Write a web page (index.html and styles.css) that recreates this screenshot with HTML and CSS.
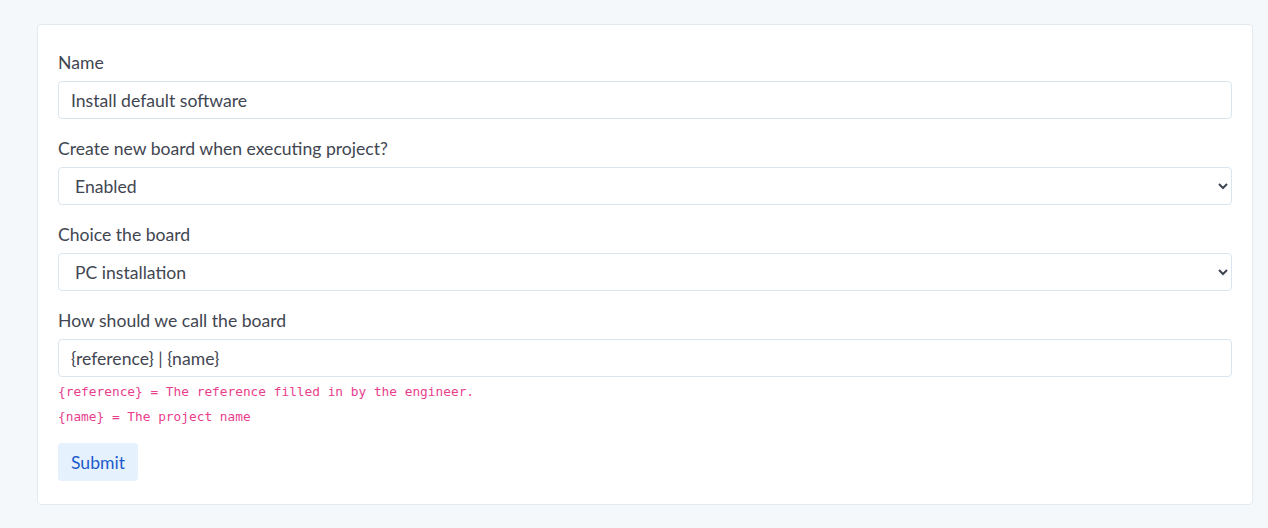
FILE: index.html
```html
<!DOCTYPE html>
<html lang="en">
<head>
<meta charset="utf-8">
<title>Project</title>
<link rel="stylesheet" href="styles.css">
</head>
<body>
<div class="page">
  <form class="card">
    <div class="group">
      <label class="label" for="name">Name</label>
      <input class="control" id="name" type="text" value="Install default software">
    </div>
    <div class="group">
      <label class="label" for="create">Create new board when executing project?</label>
      <select class="control select" id="create">
        <option>Enabled</option>
        <option>Disabled</option>
      </select>
    </div>
    <div class="group">
      <label class="label" for="board">Choice the board</label>
      <select class="control select" id="board">
        <option>PC installation</option>
      </select>
    </div>
    <div class="group">
      <label class="label" for="call">How should we call the board</label>
      <input class="control" id="call" type="text" value="{reference} | {name}">
      <div class="help">
        <code class="hint">{reference} = The reference filled in by the engineer.</code>
        <code class="hint">{name} = The project name</code>
      </div>
    </div>
    <button class="btn" type="button">Submit</button>
  </form>
</div>
</body>
</html>
```

FILE: styles.css
```css
* { box-sizing: border-box; }
html, body { margin: 0; padding: 0; }
body {
  background: #f4f8fb;
  font-family: "Lato", "Open Sans", sans-serif;
  font-size: 17.6px;
  color: #3f4651;
  width: 1268px;
  height: 528px;
  overflow: hidden;
}
.page {
  padding: 24px 15px 0 37px;
}
.card {
  width: 1216px;
  background: #ffffff;
  border: 1px solid #e2eaf0;
  border-radius: 4px;
  padding: 24px 20px 23px 20px;
  display: flex;
  flex-direction: column;
}
.group {
  display: flex;
  flex-direction: column;
  margin-bottom: 16px;
}
.label {
  line-height: 24px;
  padding-top: 2px;
  margin-bottom: 6px;
  color: #3f4651;
}
.control {
  height: 38px;
  width: 100%;
  border: 1px solid #d9e6ef;
  border-radius: 4px;
  background: #fff;
  padding: 0 12px;
  font-family: inherit;
  font-size: 17.6px;
  color: #3f4651;
  outline: none;
}
.select {
  padding-left: 12px;
}
.help {
  display: flex;
  flex-direction: column;
  gap: 4px;
  margin-top: 4px;
}
.hint {
  font-family: "DejaVu Sans Mono", monospace;
  font-size: 12.8px;
  line-height: 21px;
  color: #e83e8c;
}
.btn {
  align-self: flex-start;
  width: 80px;
  height: 38px;
  border: none;
  border-radius: 4px;
  background: #e6f1fe;
  color: #1d5ccc;
  font-family: inherit;
  font-size: 17.6px;
  padding: 0;
}
```
